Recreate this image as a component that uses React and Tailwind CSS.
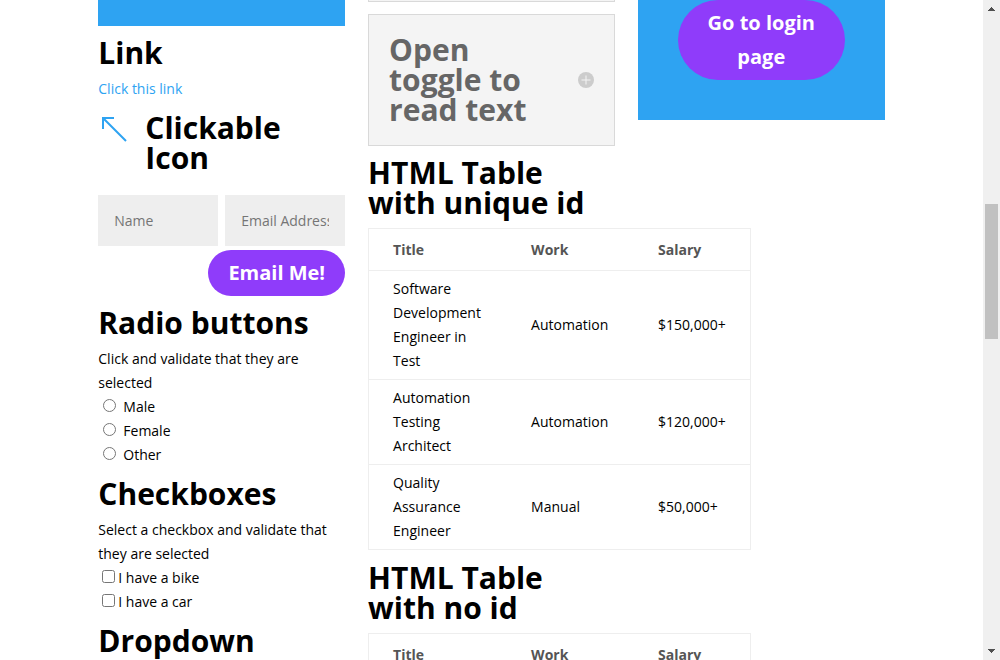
import React from "react";

const jobs = [
  { title: "Software Development Engineer in Test", work: "Automation", salary: "$150,000+" },
  { title: "Automation Testing Architect", work: "Automation", salary: "$120,000+" },
  { title: "Quality Assurance Engineer", work: "Manual", salary: "$50,000+" },
];

function Heading({ children, id, className = "pt-px pb-[9px]" }) {
  return (
    <h2 id={id} className={`text-[30px] leading-[30px] font-bold text-black ${className}`}>
      {children}
    </h2>
  );
}

function JobTable({ label }) {
  return (
    <table
      aria-labelledby={label}
      className="mb-px w-full border-separate border-spacing-0 border border-[#eeeeee] text-left"
    >
      <thead>
        <tr>
          <th className="min-w-[138px] px-6 pt-[9px] pb-2 font-bold text-[#555555]">Title</th>
          <th className="min-w-[127px] px-6 pt-[9px] pb-2 font-bold text-[#555555]">Work</th>
          <th className="min-w-[116px] px-6 pt-[9px] pb-2 font-bold text-[#555555]">Salary</th>
        </tr>
      </thead>
      <tbody>
        {jobs.map((job) => (
          <tr key={job.title}>
            <td className="border-t border-[#eeeeee] px-6 py-[6px]">{job.title}</td>
            <td className="border-t border-[#eeeeee] px-6 py-[6px]">{job.work}</td>
            <td className="border-t border-[#eeeeee] px-6 py-[6px]">{job.salary}</td>
          </tr>
        ))}
      </tbody>
    </table>
  );
}

function Scrollbar() {
  return (
    <div aria-hidden="true" className="flex w-[17px] shrink-0 flex-col items-center bg-[#f0f0f0]">
      <svg className="h-[17px] w-[17px] shrink-0" viewBox="0 0 17 17" shapeRendering="crispEdges">
        <path d="M8 7h1v1h1v1h1v1h1v1H5v-1h1V9h1V8h1z" fill="#505050" />
      </svg>
      <div className="flex w-[13px] flex-1 flex-col">
        <div className="h-[29.9%]" />
        <div className="h-[21.5%] bg-[#c1c1c1]" />
      </div>
      <svg className="h-[17px] w-[17px] shrink-0" viewBox="0 0 17 17" shapeRendering="crispEdges">
        <path d="M5 6h7v1h-1v1h-1v1H9v1H8V9H7V8H6V7H5z" fill="#505050" />
      </svg>
    </div>
  );
}

function LeftColumn() {
  return (
    <div className="flex min-w-0 flex-col gap-[11px]">
      <div className="h-[26px] bg-[#2ea3f2]" />
      <section>
        <Heading>Link</Heading>
        <a href="#link" className="block text-[#2ea3f2]">Click this link</a>
      </section>
      <section className="flex gap-[15px] pb-[2px]">
        <a href="#icon" aria-label="Clickable icon" className="h-8 w-8 shrink-0">
          <svg viewBox="0 0 32 32" className="h-8 w-8" fill="none" stroke="#2ea3f2" strokeWidth="2">
            <path d="M5 17V6h11M5 6l23 23" />
          </svg>
        </a>
        <Heading>Clickable Icon</Heading>
      </section>
      <form className="flex flex-col items-end gap-1" onSubmit={(e) => e.preventDefault()}>
        <div className="grid w-full grid-cols-2 gap-[7px]">
          <input
            aria-label="Name"
            placeholder="Name"
            className="h-[51px] w-full min-w-0 bg-[#eeeeee] px-4 placeholder:text-[#757575]"
          />
          <input
            type="email"
            aria-label="Email Address"
            placeholder="Email Address"
            className="h-[51px] w-full min-w-0 bg-[#eeeeee] px-4 placeholder:text-[#757575]"
          />
        </div>
        <button className="rounded-full bg-[#8f3cfa] px-5 py-[6px] text-[20px] leading-[34px] font-bold text-white">
          Email Me!
        </button>
      </form>
      <section>
        <Heading>Radio buttons</Heading>
        <p>Click and validate that they are selected</p>
        {["Male", "Female", "Other"].map((name) => (
          <label key={name} className="flex gap-[7px] pl-[5px]">
            <input type="radio" name="gender" value={name} className="mt-1 h-[13px] w-[13px]" />
            {name}
          </label>
        ))}
      </section>
      <section>
        <Heading>Checkboxes</Heading>
        <p>Select a checkbox and validate that they are selected</p>
        {["I have a bike", "I have a car"].map((name) => (
          <label key={name} className="flex gap-[3px] pl-1">
            <input type="checkbox" value={name} className="mt-1 h-[13px] w-[13px]" />
            {name}
          </label>
        ))}
      </section>
      <Heading>Dropdown</Heading>
    </div>
  );
}

function MiddleColumn() {
  return (
    <div className="flex min-w-0 flex-col gap-3">
      <div className="h-[2px] border-x border-b border-[#d9d9d9] bg-[#f4f4f4]" />
      <button
        aria-expanded="false"
        className="flex items-center justify-between border border-[#d9d9d9] bg-[#f4f4f4] p-5 text-left text-[30px] leading-[30px] font-bold text-[#666666]"
      >
        <span className="max-w-[155px]">Open toggle to read text</span>
        <svg viewBox="0 0 16 16" className="h-4 w-4 shrink-0">
          <circle cx="8" cy="8" r="8" fill="#cccccc" />
          <path d="M8 3.5v9M3.5 8h9" stroke="#f4f4f4" strokeWidth="1" />
        </svg>
      </button>
      <section>
        <Heading id="table-unique" className="pb-[10px]">HTML Table with unique id</Heading>
        <JobTable label="table-unique" />
      </section>
      <section>
        <Heading id="table-plain" className="pb-[10px]">HTML Table with no id</Heading>
        <JobTable label="table-plain" />
      </section>
    </div>
  );
}

export default function App() {
  return (
    <div className="flex h-screen overflow-hidden bg-white font-['Open_Sans',sans-serif] text-[14px] leading-6 font-medium text-black">
      <div className="min-w-0 flex-1">
        <main className="mx-auto grid w-4/5 grid-cols-3 items-start gap-[23px]">
          <LeftColumn />
          <MiddleColumn />
          <div className="bg-[#2ea3f2] px-10 pb-10">
            <a
              href="#login"
              className="block rounded-[40px] bg-[#8f3cfa] px-5 py-[6px] text-center text-[20px] leading-[34px] font-bold text-white"
            >
              Go to login page
            </a>
          </div>
        </main>
      </div>
      <Scrollbar />
    </div>
  );
}
